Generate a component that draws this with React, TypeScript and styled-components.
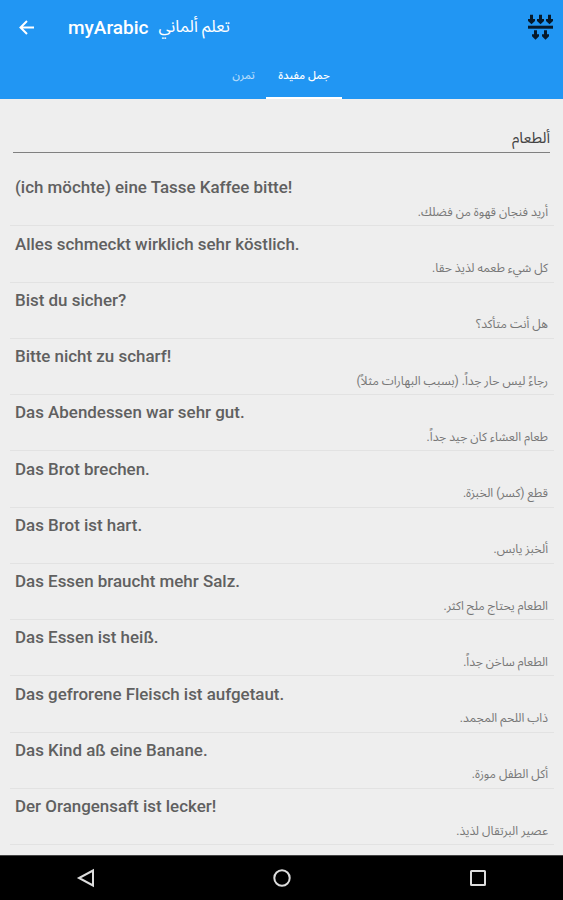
import React from 'react';
import styled, { createGlobalStyle } from 'styled-components';

const Global = createGlobalStyle`
  * { box-sizing: border-box; }
  body { margin: 0; background: #eee; font-family: Roboto, "Noto Sans Arabic", "DejaVu Sans", sans-serif; }
`;

const Screen = styled.div`
  width: 563px;
  height: 900px;
  display: flex;
  flex-direction: column;
  overflow: hidden;
  background: #eee;
`;

const Header = styled.header`
  height: 99px;
  flex: none;
  display: flex;
  flex-direction: column;
  background: #2196f3;
  color: #fff;
`;

const Toolbar = styled.div`
  height: 54px;
  display: flex;
  align-items: center;
  padding: 0 9px 0 18px;
`;

const BackIcon = styled.svg`
  width: 17px;
  height: 17px;
  margin-right: 33px;
`;

const Title = styled.h1`
  margin: 0;
  padding-top: 2px;
  font-size: 19px;
  line-height: 24px;
  font-weight: 500;
  white-space: nowrap;
`;

const Subtitle = styled.span`
  margin-left: 10px;
  font-size: 16.6px;
  line-height: 24px;
`;

const FilterIcon = styled.svg`
  width: 27px;
  height: 27px;
  margin-left: auto;
`;

const Tabs = styled.nav`
  height: 45px;
  display: flex;
  justify-content: flex-start;
  padding-left: 221px;
`;

const Tab = styled.div<{ $active?: boolean; $width: number }>`
  width: ${(p) => p.$width}px;
  display: flex;
  align-items: center;
  justify-content: center;
  font-size: 11.2px;
  font-weight: 500;
  color: ${(p) => (p.$active ? '#fff' : 'rgba(255,255,255,.65)')};
  border-bottom: 2px solid ${(p) => (p.$active ? '#fff' : 'transparent')};
`;

const Category = styled.div`
  height: 54px;
  flex: none;
  margin: 0 13px;
  padding: 28px 0 0;
  border-bottom: 1px solid #808080;
  text-align: right;
  font-size: 15.2px;
  line-height: 22px;
  color: #444;
`;

const List = styled.main`
  flex: 1;
  min-height: 0;
  padding: 17px 9px 0 10px;
`;

const Row = styled.article`
  height: 56.25px;
  display: flex;
  flex-direction: column;
  border-bottom: 1px solid #e2e2e2;
  padding: 7.3px 6px 0 5px;
`;

const German = styled.div`
  font-size: 16.93px;
  line-height: 20px;
  font-weight: 500;
  color: #606060;
`;

const Arabic = styled.div`
  margin-top: 5.7px;
  align-self: flex-end;
  font-size: 12.1px;
  line-height: 18px;
  color: #777;
  white-space: nowrap;
`;

const NavBar = styled.footer`
  height: 45px;
  flex: none;
  display: grid;
  grid-template-columns: repeat(3, 196px);
  justify-content: center;
  align-items: center;
  justify-items: center;
  background: #000;
  border-top: 1px solid #444;
`;

const NavIcon = styled.svg`
  width: 20px;
  height: 20px;
  fill: none;
  stroke: #ddd;
  stroke-width: 2;
`;

const phrases = [
  { de: '(ich möchte) eine Tasse Kaffee bitte!', ar: 'أريد فنجان قهوة من فضلك.' },
  { de: 'Alles schmeckt wirklich sehr köstlich.', ar: 'كل شيء طعمه لذيذ حقا.' },
  { de: 'Bist du sicher?', ar: 'هل أنت متأكد؟' },
  { de: 'Bitte nicht zu scharf!', ar: 'رجاءً ليس حار جداً. (بسبب البهارات مثلاً)' },
  { de: 'Das Abendessen war sehr gut.', ar: 'طعام العشاء كان جيد جداً.' },
  { de: 'Das Brot brechen.', ar: 'قطع (كسر) الخبزة.' },
  { de: 'Das Brot ist hart.', ar: 'ألخبز يابس.' },
  { de: 'Das Essen braucht mehr Salz.', ar: 'الطعام يحتاج ملح اكثر.' },
  { de: 'Das Essen ist heiß.', ar: 'الطعام ساخن جداً.' },
  { de: 'Das gefrorene Fleisch ist aufgetaut.', ar: 'ذاب اللحم المجمد.' },
  { de: 'Das Kind aß eine Banane.', ar: 'أكل الطفل موزة.' },
  { de: 'Der Orangensaft ist lecker!', ar: 'عصير البرتقال لذيذ.' },
];

export default function App() {
  return (
    <Screen>
      <Global />
      <Header>
        <Toolbar>
          <BackIcon viewBox="0 0 17 17" fill="none" stroke="#fff" strokeWidth="2">
            <path d="M16 8.5H3M9 2 2.5 8.5 9 15" />
          </BackIcon>
          <Title>myArabic</Title>
          <Subtitle dir="rtl" lang="ar">تعلم ألماني</Subtitle>
          <FilterIcon viewBox="0 0 27 27" fill="#07192a">
            <rect x="1" y="11.7" width="25" height="3" />
            {[4.5, 13.5, 22.5].map((x) => (
              <path key={x} d={`M${x - 1.5} .8h3v4.2h2v2L${x} 10.3l-3.5-3.3v-2h2z`} />
            ))}
            {[8.5, 18.5].map((x) => (
              <path key={x} d={`M${x - 1.5} 16.3h3v4h2v2L${x} 25.8l-3.5-3.5v-2h2z`} />
            ))}
          </FilterIcon>
        </Toolbar>
        <Tabs dir="ltr">
          <Tab $width={45} dir="rtl" lang="ar">تمرن</Tab>
          <Tab $width={76} $active dir="rtl" lang="ar">جمل مفيدة</Tab>
        </Tabs>
      </Header>
      <Category dir="rtl" lang="ar">ألطعام</Category>
      <List>
        {phrases.map((p) => (
          <Row key={p.de}>
            <German lang="de">{p.de}</German>
            <Arabic dir="rtl" lang="ar">{p.ar}</Arabic>
          </Row>
        ))}
      </List>
      <NavBar>
        <NavIcon viewBox="0 0 20 20"><path d="M17 2.5v15L3 10z" /></NavIcon>
        <NavIcon viewBox="0 0 20 20"><circle cx="10" cy="10" r="7.7" /></NavIcon>
        <NavIcon viewBox="0 0 20 20"><rect x="3" y="3" width="14" height="14" rx=".5" /></NavIcon>
      </NavBar>
    </Screen>
  );
}
